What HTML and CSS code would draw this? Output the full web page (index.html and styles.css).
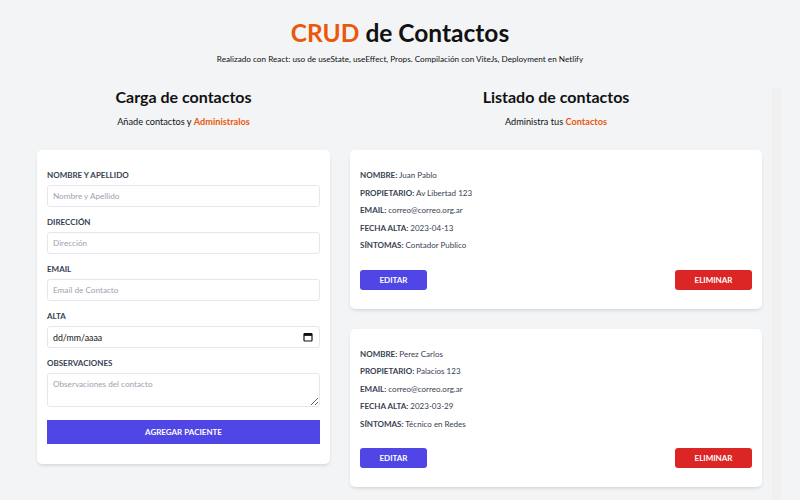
FILE: index.html
```html
<!DOCTYPE html>
<html lang="es">
<head>
<meta charset="utf-8">
<title>CRUD de Contactos</title>
<link rel="stylesheet" href="styles.css">
</head>
<body>
<header class="header">
  <h1 class="title"><span class="accent">CRUD</span> de Contactos</h1>
  <p class="lead">Realizado con React: uso de useState, useEffect, Props. Compilación con ViteJs, Deployment en Netlify</p>
</header>
<main class="layout">
  <section class="col-form">
    <h2 class="col-title">Carga de contactos</h2>
    <p class="col-sub">Añade contactos y <span class="accent strong">Administralos</span></p>
    <form class="card form-card">
      <div class="field">
        <label class="label">Nombre y Apellido</label>
        <input class="input" type="text" placeholder="Nombre y Apellido">
      </div>
      <div class="field">
        <label class="label">Dirección</label>
        <input class="input" type="text" placeholder="Dirección">
      </div>
      <div class="field">
        <label class="label">Email</label>
        <input class="input" type="email" placeholder="Email de Contacto">
      </div>
      <div class="field">
        <label class="label">Alta</label>
        <div class="input date">
          <span>dd/mm/aaaa</span>
          <svg class="cal" width="10" height="10" viewBox="0 0 10 10"><rect x="1" y="1.5" width="8" height="7.5" rx="0.8" fill="none" stroke="#111" stroke-width="1.2"/><rect x="1" y="1.5" width="8" height="2.4" fill="#111"/></svg>
        </div>
      </div>
      <div class="field">
        <label class="label">Observaciones</label>
        <textarea class="input area" placeholder="Observaciones del contacto"></textarea>
      </div>
      <button class="btn-submit" type="button">Agregar Paciente</button>
    </form>
  </section>
  <section class="col-list">
    <h2 class="col-title">Listado de contactos</h2>
    <p class="col-sub">Administra tus <span class="accent strong">Contactos</span></p>
    <article class="card contact">
      <p class="row"><b>Nombre:</b> Juan Pablo</p>
      <p class="row"><b>Propietario:</b> Av Libertad 123</p>
      <p class="row"><b>Email:</b> correo@correo.org.ar</p>
      <p class="row"><b>Fecha Alta:</b> 2023-04-13</p>
      <p class="row"><b>Síntomas:</b> Contador Publico</p>
      <div class="actions">
        <button class="btn btn-edit" type="button">Editar</button>
        <button class="btn btn-del" type="button">Eliminar</button>
      </div>
    </article>
    <article class="card contact">
      <p class="row"><b>Nombre:</b> Perez Carlos</p>
      <p class="row"><b>Propietario:</b> Palacios 123</p>
      <p class="row"><b>Email:</b> correo@correo.org.ar</p>
      <p class="row"><b>Fecha Alta:</b> 2023-03-29</p>
      <p class="row"><b>Síntomas:</b> Técnico en Redes</p>
      <div class="actions">
        <button class="btn btn-edit" type="button">Editar</button>
        <button class="btn btn-del" type="button">Eliminar</button>
      </div>
    </article>
  </section>
</main>
</body>
</html>
```
FILE: styles.css
```css
* { box-sizing: border-box; }
html, body { margin: 0; padding: 0; }
body {
  background: #f3f4f6;
  font-family: "Lato", "Open Sans", sans-serif;
  color: #111827;
  overflow: hidden;
}
.header { padding-top: 18px; text-align: center; }
.title {
  margin: 0;
  font-size: 24.5px;
  line-height: 30px;
  font-weight: 700;
  color: #111;
}
.accent { color: #ea580c; }
.strong { font-weight: 700; }
.lead {
  margin: 5px 0 0;
  font-size: 8.2px;
  line-height: 12px;
  color: #111;
}
.layout {
  display: flex;
  margin-top: 23px;
  padding-left: 27px;
  align-items: flex-start;
}
.col-form { width: 313px; padding: 0 10px; }
.col-list {
  width: 441px;
  height: 500px;
  padding: 0 10px;
  overflow-y: auto;
  border-right: 9px solid #f0f0f0;
}
.col-title {
  margin: 0;
  text-align: center;
  font-size: 16px;
  line-height: 18px;
  font-weight: 700;
  color: #111;
}
.col-sub {
  margin: 10px 0 0;
  text-align: center;
  font-size: 9.2px;
  line-height: 12px;
  color: #111;
}
.card {
  background: #fff;
  border-radius: 5px;
  box-shadow: 0 2px 4px -1px rgba(0,0,0,0.1), 0 2px 3px -1px rgba(0,0,0,0.06);
}
.form-card {
  margin-top: 22px;
  padding: 20px 10px 20px;
}
.field { margin-bottom: 10px; }
.label {
  display: block;
  font-size: 8px;
  line-height: 10px;
  font-weight: 700;
  text-transform: uppercase;
  color: #374151;
  margin-bottom: 5px;
}
.input {
  display: block;
  width: 100%;
  height: 22px;
  border: 1px solid #e5e7eb;
  border-radius: 3px;
  padding: 0 5px;
  font-family: inherit;
  font-size: 8.2px;
  color: #111;
  background: #fff;
  outline: none;
}
.input::placeholder { color: #9ca3af; }
.date {
  display: flex;
  align-items: center;
  justify-content: space-between;
  padding-right: 6px;
  font-size: 8.8px;
}
.area {
  height: 34px;
  padding-top: 5px;
  resize: vertical;
}
.btn-submit {
  display: block;
  width: 100%;
  height: 24px;
  margin-top: 13px;
  border: 0;
  background: #4f46e5;
  color: #fff;
  font-family: inherit;
  font-size: 8px;
  font-weight: 700;
  text-transform: uppercase;
}
.contact {
  margin-top: 22px;
  margin-bottom: 20px;
  padding: 20px 10px 19px;
}
.contact + .contact { margin-top: 0; }
.row {
  margin: 0 0 7.5px;
  font-size: 8px;
  line-height: 10px;
  color: #374151;
}
.row b { font-weight: 700; text-transform: uppercase; }
.actions {
  display: flex;
  justify-content: space-between;
  margin-top: 19.5px;
}
.btn {
  height: 20px;
  border: 0;
  border-radius: 3px;
  color: #fff;
  font-family: inherit;
  font-size: 8px;
  font-weight: 700;
  text-transform: uppercase;
}
.btn-edit { width: 67px; background: #4f46e5; }
.btn-del { width: 77px; background: #dc2626; }
```
